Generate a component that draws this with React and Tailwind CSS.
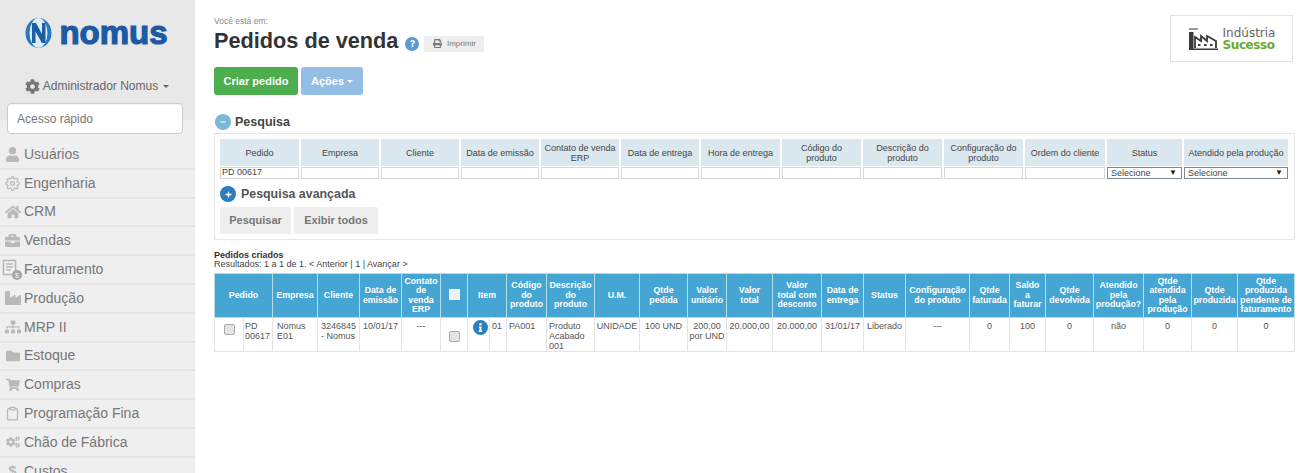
import React from "react";
import { FaUser, FaHome, FaBriefcase, FaIndustry, FaSitemap, FaFolder, FaShoppingCart, FaCogs, FaPrint, FaCog, FaInfo, FaPlus, FaMinus, FaQuestion } from "react-icons/fa";
import { FiSettings, FiClipboard } from "react-icons/fi";

function Fatur() {
  return (
    <svg width="21" height="22" viewBox="0 0 21 22">
      <path d="M1.5 1.5h12v14h-12z" fill="#f3f3f3" stroke="#b5b5b5" strokeWidth="1.6" />
      <path d="M4 5h7M4 8h7M4 11h5" stroke="#b5b5b5" strokeWidth="1.3" />
      <circle cx="15" cy="16" r="5" fill="#a3a3a3" />
      <text x="15" y="19" textAnchor="middle" fontSize="8" fill="#eee" fontFamily="Liberation Sans">$</text>
    </svg>
  );
}

const menu = [
  ["Usuários", <FaUser size={15} />],
  ["Engenharia", <FiSettings size={15} />],
  ["CRM", <FaHome size={16} />],
  ["Vendas", <FaBriefcase size={15} />],
  ["Faturamento", <Fatur />],
  ["Produção", <FaIndustry size={16} />],
  ["MRP II", <FaSitemap size={16} />],
  ["Estoque", <FaFolder size={14} />],
  ["Compras", <FaShoppingCart size={14} />],
  ["Programação Fina", <FiClipboard size={15} />],
  ["Chão de Fábrica", <FaCogs size={14} />],
  ["Custos", <span className="text-[15px] font-bold">$</span>],
];

const searchCols = [
  ["Pedido", 79], ["Empresa", 78], ["Cliente", 78], ["Data de emissão", 78], ["Contato de venda ERP", 78],
  ["Data de entrega", 78], ["Hora de entrega", 79], ["Código do\nproduto", 79], ["Descrição do\nproduto", 79],
  ["Configuração do\nproduto", 79], ["Ordem do cliente", 80], ["Status", 75], ["Atendido pela produção", 104],
];

const resultCols = [
  ["Pedido", 58, 2], ["Empresa", 45], ["Cliente", 42], ["Data de emissão", 42], ["Contato de venda ERP", 39],
  ["CHECK", 27], ["Item", 39, 2], ["Código do produto", 40], ["Descrição\ndo\nproduto", 48], ["U.M.", 45],
  ["Qtde pedida", 48], ["Valor unitário", 39], ["Valor\ntotal", 46], ["Valor\ntotal com\ndesconto", 49],
  ["Data de entrega", 42], ["Status", 42], ["Configuração do produto", 64], ["Qtde faturada", 40],
  ["Saldo\na\nfaturar", 36], ["Qtde devolvida", 48], ["Atendido pela produção?", 50],
  ["Qtde atendida pela produção", 48], ["Qtde produzida", 46], ["Qtde\nproduzida\npendente de\nfaturamento", 57],
];
const bodyWidths = [29, 29, 45, 42, 42, 39, 27, 22, 17, 40, 48, 45, 48, 39, 46, 49, 42, 42, 64, 40, 36, 48, 50, 48, 46, 57];

function Check() {
  return <span className="inline-block w-[11px] h-[11px] rounded-[2px] border border-[#aaaaaa] bg-[#e4e4e4]" />;
}

function Td({ children, className = "" }) {
  return <td className={`border border-[#e4e4e4] px-[5px] pt-[3px] pb-0 align-top leading-[10px] ${className}`}>{children}</td>;
}

function Select() {
  return (
    <div className="flex items-center justify-between h-[12px] border border-[#7d8a94] pl-[3px] pr-[4px] text-[9px] leading-[10px] text-[#444]">
      <span>Selecione</span>
      <span className="text-[8px] text-[#222]">▼</span>
    </div>
  );
}

export default function App() {
  return (
    <div className="flex h-[473px] w-[1299px] overflow-hidden bg-white font-['Liberation_Sans',Arial,sans-serif]">
      <aside className="w-[195px] shrink-0 bg-[#efefef] flex flex-col">
        <div className="h-[120px] bg-[#e8e8e8] shrink-0 relative">
          <div className="flex items-center justify-center gap-[6px] pt-[16px] pr-[3px]">
            <svg width="29" height="32" viewBox="0 0 29 32">
              <ellipse cx="14.5" cy="16" rx="13" ry="15" fill="#2a78c2" />
              <ellipse cx="14.5" cy="16" rx="9" ry="15" fill="#dcebf7" />
              <path d="M8 26V6h4l6 11V6h3.5v20h-3.6L11.500 14.500V26z" fill="#1a5ea8" />
            </svg>
            <span className="text-[33px] leading-[34px] font-bold text-[#1d5aa6] [-webkit-text-stroke:1.2px_#1d5aa6]">nomus</span>
          </div>
          <div className="flex items-center justify-center gap-[3px] mt-[27px] pr-[1px] text-[12px] text-[#666]">
            <FaCog size={15} className="text-[#777]" />
            <span>Administrador Nomus</span>
            <span className="ml-[2px] w-0 h-0 border-x-[3px] border-x-transparent border-t-[3px] border-t-[#666]" />
          </div>
          <input
            placeholder="Acesso rápido"
            className="absolute left-[7px] top-[103px] w-[176px] h-[31px] rounded-[4px] bg-white border border-[#cccccc] px-[9px] text-[12px] text-[#555] placeholder:text-[#777] shadow-[inset_0_1px_1px_rgba(0,0,0,0.05)]"
          />
        </div>
        <nav className="pt-[21px]">
          {menu.map(([label, icon]) => (
            <div key={label} className="h-[28.8px] flex items-center border-b-2 border-b-[#e5e5e5] text-[#777]">
              <span className="w-[24px] shrink-0 flex justify-center pl-[1px] text-[#b9b9b9]">{icon}</span>
              <span className="text-[14px]">{label}</span>
            </div>
          ))}
        </nav>
      </aside>

      <main className="flex-1 min-w-0 pl-[19px] pr-[4px] relative">
        <div className="pt-[16px] text-[8.5px] leading-[11px] text-[#888]">Você está em:</div>
        <div className="flex items-center h-[27px]">
          <h1 className="text-[21.7px] font-bold leading-[27px] text-[#333]">Pedidos de venda</h1>
          <span className="ml-[7px] mt-[6px] w-[14px] h-[14px] rounded-full bg-[#5b9bd5] flex items-center justify-center text-white"><FaQuestion size={7} /></span>
          <span className="ml-[5px] mt-[6px] h-[16px] w-[60px] bg-[#eeeeee] flex items-center justify-center gap-[5px] text-[8px] text-[#777]"><FaPrint size={9} />Imprimir</span>
        </div>
        <div className="absolute right-[6px] top-[15px] w-[123px] h-[47px] border border-[#e2e2e2] flex items-center justify-center gap-[4px]">
          <svg width="31" height="24" viewBox="0 0 31 24">
            <path d="M1 5h4.500v18H1zM5 21.500h25V23H5zM1 2.500h9V1.500H1z" fill="#3a3a3a" />
            <path d="M7 21v-11l6 4V9l6 5V9l9 5v7" fill="none" stroke="#3a3a3a" strokeWidth="1.8" />
            <path d="M10 18h2.500M16 18h2.500M22 18h2.500" stroke="#3a3a3a" strokeWidth="2.200" />
          </svg>
          <div className="font-['DejaVu_Sans',sans-serif] text-[12px] leading-[12px]">
            <div className="text-[#666]">Indústria</div>
            <div className="text-[#6aaa2c] font-bold tracking-[-0.4px]">Sucesso</div>
          </div>
        </div>

        <div className="flex gap-[3px] mt-[13px]">
          <button className="w-[84px] h-[28px] rounded-[3px] bg-[#4cae4c] text-white text-[11px] font-bold">Criar pedido</button>
          <button className="w-[62px] h-[28px] rounded-[3px] bg-[#93bfe6] text-white text-[11px] font-bold flex items-center justify-center gap-[3px]">
            Ações <span className="w-0 h-0 border-x-[3px] border-x-transparent border-t-[3px] border-t-white" />
          </button>
        </div>

        <div className="flex items-center gap-[4px] mt-[19px] h-[16px] pl-[1px]">
          <span className="w-[16px] h-[16px] rounded-full bg-[#7ab8d6] flex items-center justify-center text-white"><FaMinus size={6} /></span>
          <span className="text-[12.500px] font-bold text-[#444]">Pesquisa</span>
        </div>

        <section className="mt-[3px] w-[1081px] h-[107px] border border-[#e6e6e6] pl-[3px] pt-[5px]">
          <table className="table-fixed border-separate border-spacing-x-[2px] border-spacing-y-0 w-[1072px] text-[#444]">
            <colgroup>{searchCols.map(([k, w]) => <col key={k} style={{ width: w }} />)}</colgroup>
            <thead>
              <tr>
                {searchCols.map(([k]) => (
                  <th key={k} className="h-[27px] bg-[#dbe8f0] font-normal text-[9px] leading-[10px] text-center px-[2px] text-[#444] whitespace-pre-line">{k}</th>
                ))}
              </tr>
            </thead>
            <tbody>
              <tr>
                {searchCols.map(([k], i) => (
                  <td key={k} className="pt-[1px]">
                    {i > 10 ? <Select /> : (
                      <input defaultValue={i === 0 ? "PD 00617" : ""} className="block w-full h-[12px] border border-[#d6d6d6] bg-white px-[1px] text-[9px] text-[#444]" />
                    )}
                  </td>
                ))}
              </tr>
            </tbody>
          </table>
          <div className="flex items-center gap-[5px] mt-[7px] h-[16px] pl-[2px]">
            <span className="w-[16px] h-[16px] rounded-full bg-[#2a7ec0] flex items-center justify-center text-white"><FaPlus size={7} /></span>
            <span className="text-[12.400px] font-bold text-[#555]">Pesquisa avançada</span>
          </div>
          <div className="flex gap-[3px] mt-[5px] pl-[2px]">
            <button className="w-[71px] h-[27px] rounded-[2px] bg-[#eeeeee] text-[11px] font-bold text-[#777]">Pesquisar</button>
            <button className="w-[84px] h-[27px] rounded-[2px] bg-[#eeeeee] text-[11px] font-bold text-[#777]">Exibir todos</button>
          </div>
        </section>

        <div className="mt-[11px] text-[9px] leading-[9px] text-[#333]">
          <div className="font-bold">Pedidos criados</div>
          <div className="text-[#444]">Resultados: 1 a 1 de 1. &lt; Anterior | 1 | Avançar &gt;</div>
        </div>

        <table className="table-fixed border-collapse w-[1080px] mt-[4px] text-[9px] text-[#555]">
          <colgroup>{bodyWidths.map((w, i) => <col key={i} style={{ width: w }} />)}</colgroup>
          <thead>
            <tr className="bg-[#45a5d3] text-white">
              {resultCols.map(([k, , span]) => (
                <th key={k} colSpan={span || 1} className="h-[44px] border border-[#b8dcec] font-bold text-[8.800px] leading-[9.500px] text-center px-0 text-[#ffffff] whitespace-pre-line">
                  {k === "CHECK" ? <span className="inline-block w-[11px] h-[11px] bg-[#f2f2f2]" /> : k}
                </th>
              ))}
            </tr>
          </thead>
          <tbody>
            <tr className="h-[33px]">
              <Td className="text-center"><span className="block pt-[3px]"><Check /></span></Td>
              <Td className="!px-[1px]">PD 00617</Td>
              <Td className="!px-[4px]">Nomus E01</Td>
              <Td className="!px-[3px]">3246845<br />- Nomus</Td>
              <Td className="text-center !px-0">10/01/17</Td>
              <Td className="text-center">---</Td>
              <Td className="text-center"><span className="block pt-[10px]"><Check /></span></Td>
              <Td className="!px-[5px] !pt-[2px]"><span className="flex w-[15px] h-[15px] rounded-full bg-[#2a7ec0] items-center justify-center text-white"><FaInfo size={9} /></span></Td>
              <Td className="!px-[2px]">01</Td>
              <Td className="!px-[2px]">PA001</Td>
              <Td className="!px-[2px]">Produto Acabado 001</Td>
              <Td className="!px-0 text-center">UNIDADE</Td>
              <Td className="text-center !px-[1px]">100 UND</Td>
              <Td className="text-center !px-[1px]">200,00 por UND</Td>
              <Td className="text-center !px-0">20.000,00</Td>
              <Td className="text-center !px-0">20.000,00</Td>
              <Td className="text-center !px-0">31/01/17</Td>
              <Td className="text-center !px-0">Liberado</Td>
              <Td className="text-center">---</Td>
              <Td className="text-center">0</Td>
              <Td className="text-center">100</Td>
              <Td className="text-center">0</Td>
              <Td className="text-center">não</Td>
              <Td className="text-center">0</Td>
              <Td className="text-center">0</Td>
              <Td className="text-center">0</Td>
            </tr>
          </tbody>
        </table>
      </main>
    </div>
  );
}
